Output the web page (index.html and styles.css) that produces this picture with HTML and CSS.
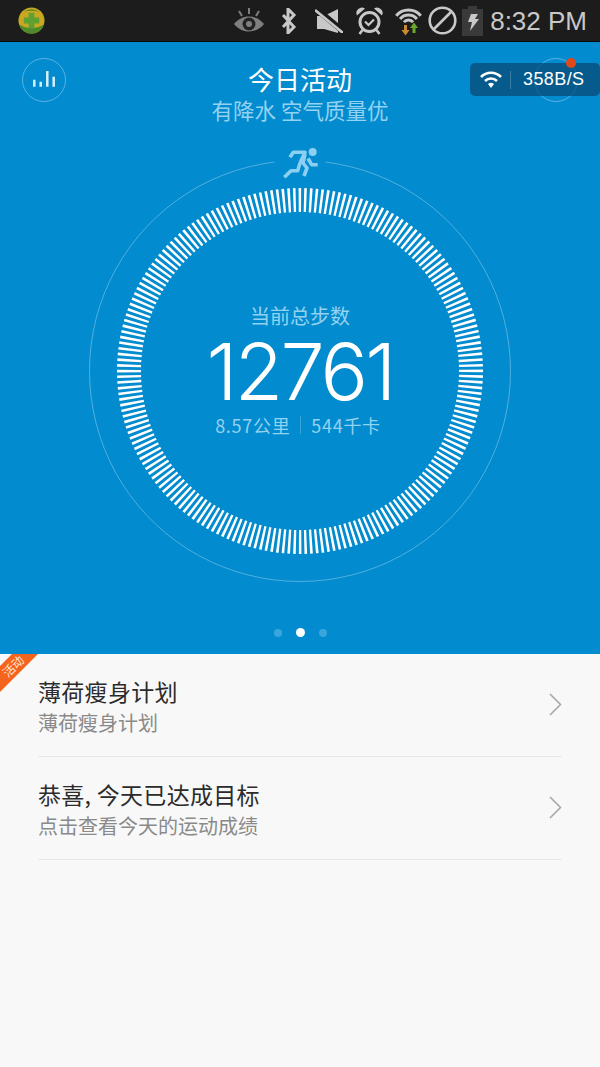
FILE: index.html
```html
<!DOCTYPE html>
<html lang="zh-CN">
<head>
    <meta charset="UTF-8">
    <meta name="viewport" content="width=device-width, initial-scale=1.0">
    <title>今日活动</title>
    <link rel="stylesheet" href="styles.css">
</head>
<body>
    <div class="status-bar">
        <svg class="app-logo" width="27" height="27" viewBox="0 0 28 28">
            <circle cx="14" cy="14" r="13.500" fill="#c9a820"/>
            <path d="M1 18a13.500 13.500 0 0 0 26 0c-6 5-20 5-26 0zM6 5a13.500 13.500 0 0 1 16 0c-5-1.500-11-1.500-16 0z" fill="#4f8a2c"/>
            <path d="M11 6h6v5h5v6h-5v5h-6v-5H6v-6h5z" fill="#5fa033"/>
        </svg>
        <div class="status-icons">
            <svg class="eye" width="30" height="25" viewBox="0 0 30 25">
                <path d="M0 16c8-10 22-10 30 0-8 10-22 10-30 0z" fill="#7f7f7f"/>
                <circle cx="15" cy="16" r="6.500" fill="#222"/>
                <circle cx="15" cy="16" r="3" fill="#7f7f7f"/>
                <path d="M15 0v6M5 3l3 5M25 3l-3 5" stroke="#7f7f7f" stroke-width="2" fill="none"/>
            </svg>
            <svg class="bt" width="16" height="26" viewBox="0 0 16 26">
                <path d="M2 7l11 12-6 6V1l6 6L2 19" stroke="#c8c8c8" stroke-width="3" fill="none"/>
            </svg>
            <svg class="mute" width="28" height="24" viewBox="0 0 28 24">
                <path d="M2 7h7l14-7v24L9 20H2z" fill="#c8c8c8"/>
                <path d="M-1 -2L29 23" stroke="#1c1c1c" stroke-width="6"/>
                <path d="M0 1L28 24" stroke="#c8c8c8" stroke-width="2.600"/>
            </svg>
            <svg class="alarm" width="27" height="28" viewBox="0 0 27 28">
                <circle cx="13.500" cy="15" r="9.500" fill="none" stroke="#c8c8c8" stroke-width="3"/>
                <path d="M9 14.500l3.500 3.500L18 12.500" fill="none" stroke="#c8c8c8" stroke-width="2.200"/>
                <path d="M1 8.500a5.500 5.500 0 0 1 8-7zM26 8.500a5.500 5.500 0 0 0-8-7z" fill="#c8c8c8"/>
                <path d="M6.500 23l-3 4M20.500 23l3 4" stroke="#c8c8c8" stroke-width="2.600"/>
            </svg>
            <svg class="wifi" width="29" height="30" viewBox="0 0 29 30">
                <path d="M2.200 9.700a16 16 0 0 1 24.600 0M6.100 13a11 11 0 0 1 16.800 0M9.900 16.100a6 6 0 0 1 9.200 0" fill="none" stroke="#c8c8c8" stroke-width="3"/>
                <path d="M10 19v5H7.500l4 5.500 4-5.500H13v-5z" fill="#c98a32"/>
                <path d="M20 16.500l-4 5.500h2.500v5h3v-5H24z" fill="#6aa82c"/>
            </svg>
            <svg class="block" width="29" height="29" viewBox="0 0 29 29">
                <circle cx="14.500" cy="14.500" r="12.800" fill="none" stroke="#c8c8c8" stroke-width="2.600"/>
                <path d="M6 23L23 6" stroke="#c8c8c8" stroke-width="2.600"/>
            </svg>
            <svg class="battery" width="21" height="30" viewBox="0 0 21 30">
                <path d="M6 0h9v3h6v27H0V3h6z" fill="#3a3a3a"/>
                <path d="M9 8h7l-3 5h4L8 25l2-9H6z" fill="#c8c8c8"/>
            </svg>
            <span class="clock">8:32 PM</span>
        </div>
    </div>

    <div class="hero">
        <div class="hero-top">
            <div class="round-btn">
                <svg width="22" height="18" viewBox="0 0 22 18">
                    <path d="M1.300 8.700v7M7.700 10.700v5M14.300 0v15.700M20.700 5.700v10" stroke="#d8f0fb" stroke-width="2.500" fill="none"/>
                </svg>
            </div>
            <div class="hero-title">
                <h1>今日活动</h1>
                <p>有降水 空气质量优</p>
            </div>
            <div class="round-btn">
                <span class="btn-dot"></span>
            </div>
        </div>

        <div class="ring-wrap">
            <svg class="ring" width="422" height="437" viewBox="0 -15 422 437">
                <path class="ring-outer" d="M236.500 2.050A210.500 210.500 0 1 1 185.500 2.050"/>
                <circle class="ring-ticks" cx="211" cy="211" r="171" pathLength="200" transform="rotate(-90.450 211 211)"/>
                <g class="runner">
                    <circle cx="223.700" cy="-8" r="4"/>
                    <path d="M201-2.700l3.300-5H216l-5 10.700M219-1.500l3.700 6.200h6M195.300 17.300l6.700-6.600h6.700l2.300-7.700M216-6l-2 9 4 5-3 8"/>
                </g>
            </svg>
            <div class="ring-text">
                <div class="ring-label">当前总步数</div>
                <div class="ring-steps">12761</div>
                <div class="ring-stats">
                    <span class="stat-dist">8.57公里</span>
                    <i class="stat-sep"></i>
                    <span>544千卡</span>
                </div>
            </div>
        </div>

        <div class="pager">
            <span class="pager-dot"></span>
            <span class="pager-dot active"></span>
            <span class="pager-dot"></span>
        </div>

        <div class="net-widget">
            <svg width="22" height="18" viewBox="0 0 22 18">
                <path d="M1 6a14 14 0 0 1 20 0M5 10a8.500 8.500 0 0 1 12 0" fill="none" stroke="#fff" stroke-width="2.600"/>
                <path d="M8 13a4.500 4.500 0 0 1 6 0l-3 4z" fill="#fff"/>
            </svg>
            <i class="net-sep"></i>
            <span class="net-speed">358B/S</span>
        </div>
    </div>

    <div class="list">
        <div class="ribbon"><span>活动</span></div>
        <div class="row">
            <div class="row-text">
                <div class="row-title">薄荷瘦身计划</div>
                <div class="row-sub">薄荷瘦身计划</div>
            </div>
            <svg class="chevron" width="13" height="23" viewBox="0 0 13 23">
                <path d="M1 1l10.500 10.500L1 22" fill="none" stroke="#a8a8a8" stroke-width="1.600"/>
            </svg>
        </div>
        <div class="row">
            <div class="row-text">
                <div class="row-title">恭喜, 今天已达成目标</div>
                <div class="row-sub">点击查看今天的运动成绩</div>
            </div>
            <svg class="chevron" width="13" height="23" viewBox="0 0 13 23">
                <path d="M1 1l10.500 10.500L1 22" fill="none" stroke="#a8a8a8" stroke-width="1.600"/>
            </svg>
        </div>
    </div>
</body>
</html>
```

FILE: styles.css
```css
* {
    box-sizing: border-box;
}
html, body {
    height: 100%;
}
body {
    margin: 0;
    display: flex;
    flex-direction: column;
    background-color: #f8f8f8;
    font-family: "Noto Sans CJK SC", "Noto Sans", sans-serif;
    overflow: hidden;
}
.status-bar {
    height: 42px;
    flex-shrink: 0;
    display: flex;
    align-items: center;
    padding: 0 13px 0 18px;
    background-color: #1c1c1c;
    border-bottom: 1px solid #0b0b0b;
}
.status-icons {
    margin-left: auto;
    display: flex;
    align-items: center;
}
.status-icons svg {
    display: block;
}
.bt { margin-left: 17px; }
.mute { margin-left: 18px; }
.alarm { margin-left: 13px; }
.wifi { margin-left: 11px; }
.block { margin-left: 5px; }
.battery { margin-left: 5px; }
.clock {
    margin-left: 7px;
    font-family: "Liberation Sans", sans-serif;
    font-size: 26px;
    line-height: 30px;
    color: #c8c8c8;
    white-space: nowrap;
}
.hero {
    position: relative;
    height: 612px;
    flex-shrink: 0;
    padding-top: 16px;
    background-color: #028bce;
}
.hero-top {
    height: 87px;
    display: flex;
    justify-content: space-between;
    align-items: flex-start;
    padding: 0 22px;
}
.round-btn {
    position: relative;
    width: 44px;
    height: 44px;
    display: flex;
    align-items: center;
    justify-content: center;
    border: 1px solid #56b4e3;
    border-radius: 50%;
}
.btn-dot {
    position: absolute;
    top: -1px;
    right: 1px;
    width: 10px;
    height: 10px;
    border-radius: 50%;
    background-color: #e2491a;
    z-index: 2;
}
.hero-title {
    text-align: center;
    margin-top: 4px;
}
.hero-title h1 {
    margin: 0;
    font-size: 26px;
    font-weight: 400;
    line-height: 34px;
    color: #fff;
}
.hero-title p {
    margin: 0;
    font-size: 21.500px;
    line-height: 28px;
    color: #93d2f1;
}
.ring-wrap {
    position: relative;
    width: 422px;
    margin: 0 auto;
}
.ring {
    display: block;
}
.ring-outer {
    fill: none;
    stroke: #4fb0e0;
    stroke-width: 1;
}
.ring-ticks {
    fill: none;
    stroke: #fff;
    stroke-width: 24;
    stroke-dasharray: 0.46 0.54;
}
.runner {
    fill: none;
    stroke: #8dcff1;
    stroke-width: 3.600;
    stroke-linejoin: round;
}
.runner circle {
    fill: #8dcff1;
    stroke: none;
}
.ring-text {
    position: absolute;
    left: 0;
    right: 0;
    top: 157px;
    display: flex;
    flex-direction: column;
    align-items: center;
}
.ring-label {
    font-size: 20px;
    line-height: 28px;
    color: #93d2f1;
}
.ring-steps {
    font-family: Inter, sans-serif;
    font-weight: 300;
    font-size: 79px;
    line-height: 82px;
    letter-spacing: -2.800px;
    color: #fff;
}
.ring-stats {
    display: flex;
    align-items: center;
    gap: 10px;
    font-size: 18px;
    line-height: 26px;
    letter-spacing: 0.700px;
    color: #93d2f1;
    transform: translateX(-2px);
}
.stat-sep {
    width: 1px;
    height: 18px;
    background-color: #3aa3d8;
}
.pager {
    position: absolute;
    left: 0;
    right: 0;
    top: 586px;
    display: flex;
    justify-content: center;
    align-items: center;
    gap: 14px;
}
.pager-dot {
    width: 8px;
    height: 8px;
    border-radius: 50%;
    background-color: #3aa5dc;
}
.pager-dot.active {
    width: 9px;
    height: 9px;
    background-color: #fff;
}
.net-widget {
    position: absolute;
    top: 21px;
    right: 0;
    width: 130px;
    height: 33px;
    display: flex;
    align-items: center;
    padding-left: 10px;
    border-radius: 5px;
    background-color: rgba(8, 72, 115, 0.72);
}
.net-sep {
    width: 1px;
    height: 18px;
    margin: 0 12px 0 8px;
    background-color: #3d7ea6;
}
.net-speed {
    font-family: "Liberation Sans", sans-serif;
    font-size: 18px;
    letter-spacing: 0.400px;
    color: #fff;
}
.list {
    position: relative;
    flex: 1;
    padding: 0 38px;
}
.ribbon {
    position: absolute;
    left: 0;
    top: 0;
    width: 38px;
    height: 38px;
    background-color: #f5641c;
    clip-path: polygon(12px 0, 38px 0, 0 38px, 0 12px);
}
.ribbon span {
    position: absolute;
    left: 1px;
    top: 4px;
    display: block;
    font-size: 12px;
    line-height: 16px;
    width: 24px;
    text-align: center;
    color: #ffe9dc;
    transform: rotate(-45deg);
}
.row {
    height: 103px;
    display: flex;
    align-items: center;
    justify-content: space-between;
    padding-top: 2px;
    border-bottom: 1px solid #e8e8e8;
}
.row-title {
    font-size: 23px;
    line-height: 32px;
    letter-spacing: 0.300px;
    color: #2b2b2b;
}
.row-sub {
    margin-top: 2px;
    font-size: 20px;
    line-height: 28px;
    color: #8a8a8a;
}
.chevron {
    display: block;
    margin-top: -4px;
}
```
